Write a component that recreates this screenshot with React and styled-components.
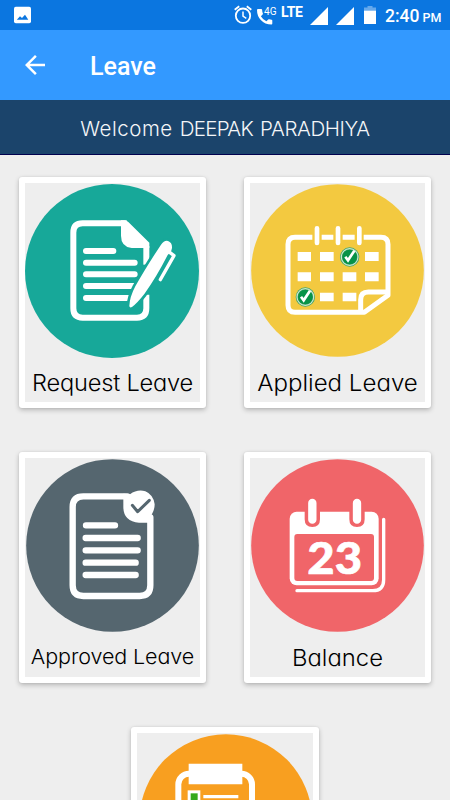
import React from 'react';
import styled, { createGlobalStyle } from 'styled-components';

const GlobalStyle = createGlobalStyle`
  * { box-sizing: border-box; }
  body { margin: 0; background: #eeeeee; }
`;

const Screen = styled.div`
  width: 450px;
  height: 800px;
  overflow: hidden;
  background: #eeeeee;
  font-family: Inter, 'Liberation Sans', sans-serif;
`;

const StatusBar = styled.div`
  display: flex;
  align-items: flex-start;
  justify-content: space-between;
  height: 30px;
  padding: 0 9px 0 14px;
  background: #0b76e0;
  color: #fff;
  font-family: Roboto, sans-serif;
  svg { display: block; flex: none; }
`;

const StatusGroup = styled.div`
  display: flex;
  align-items: flex-start;
  height: 30px;
`;

const StatusIcon = styled.svg`
  width: ${(p) => p.$w}px;
  height: 30px;
  margin-right: ${(p) => p.$gap || 0}px;
`;

const Network = styled.span`
  width: 24px;
  margin-right: 5px;
  font-size: 14px;
  font-weight: 700;
  line-height: 16px;
  padding-top: 4px;
  letter-spacing: -0.3px;
`;

const Clock = styled.span`
  width: 56px;
  font-size: 17.5px;
  font-weight: 500;
  line-height: 22px;
  padding-top: 5px;
  white-space: nowrap;
`;

const Meridiem = styled.span`
  margin-left: 3px;
  font-size: 12.5px;
`;

const Toolbar = styled.header`
  display: flex;
  align-items: center;
  height: 70px;
  padding-left: 20px;
  background: #3399ff;
  color: #fff;
`;

const BackButton = styled.button`
  display: flex;
  width: 30px;
  height: 30px;
  padding: 0;
  border: 0;
  background: none;
  color: #fff;
`;

const Title = styled.h1`
  margin: 3px 0 0 40px;
  font: 500 25px/30px Roboto, sans-serif;
`;

const Banner = styled.div`
  display: flex;
  justify-content: center;
  gap: 7px;
  height: 55px;
  padding-top: 15px;
  border-bottom: 1px solid #00004e;
  background: #1b446b;
  color: #f4f6f8;
  font-size: 20.5px;
  font-weight: 300;
  line-height: 28px;
  font-feature-settings: 'cv11';
  white-space: nowrap;
`;

const BannerWord = styled.span`
  letter-spacing: ${(p) => p.$spacing}px;
`;

const Grid = styled.main`
  display: grid;
  grid-template-columns: 187px 187px;
  column-gap: 38px;
  row-gap: 44px;
  padding: 22px 19px 0;
`;

const Card = styled.section`
  width: ${(p) => (p.$wide ? 188 : 187)}px;
  height: 231px;
  padding: 6px;
  border-radius: 3px;
  background: #fff;
  box-shadow: 0 2px 5px rgba(0, 0, 0, 0.24), 0 0 2px rgba(0, 0, 0, 0.08);
  ${(p) => p.$wide && 'grid-column: 1 / -1; justify-self: center;'}
`;

const CardBody = styled.div`
  height: 219px;
  background: #eeeeee;
`;

const Art = styled.svg`
  display: block;
  width: 175px;
  height: 175px;
  margin: 0 auto;
`;

const Label = styled.div`
  display: flex;
  justify-content: center;
  padding-top: ${(p) => p.$top}px;
  color: #000;
  font-size: ${(p) => p.$size}px;
  font-weight: 300;
  line-height: 30px;
  letter-spacing: ${(p) => p.$spacing}px;
  font-feature-settings: 'cv11';
  white-space: nowrap;
  transform: scaleX(${(p) => p.$stretch});
`;

const PEN = 'M358 408Q359 381 376 349Q408 292 453 224Q463 210 474 213Q487 218 486 234L483 245L473 255Q440 320 403 372Q382 399 366 411Q359 415 358 408Z';

const RequestArt = () => (
  <Art viewBox="45 39 525 525">
    <circle cx="306" cy="303" r="261" fill="#17a899" />
    <g fill="none" stroke="#fff" strokeWidth="18">
      <path d="M350 160H218Q190 160 190 188V415Q190 443 218 443H381Q409 443 409 415V374" />
      <path d="M409 228V284" />
      <g strokeLinecap="round">
        <path d="M228 243H310M228 278H374M228 313H374M228 348H372M228 384H356" />
      </g>
    </g>
    <path d="M333 151H343Q350 151 355 156L418 218V234H365Q333 230 333 197Z" fill="#fff" />
    <path d={PEN} fill="#17a899" stroke="#17a899" strokeWidth="16" />
    <path d={PEN} fill="#fff" />
    <path d="M476 245L492 257L451 329" fill="none" stroke="#fff" strokeWidth="10" strokeLinecap="round" strokeLinejoin="round" />
  </Art>
);

const CheckBadge = ({ x, y }) => (
  <g transform={`translate(${x} ${y})`}>
    <circle r="29" fill="#43a568" />
    <circle r="25" fill="none" stroke="#cbe8d2" strokeWidth="3.5" />
    <circle r="22" fill="#079247" />
    <path d="M-13 -1L-5 10L14 -19" fill="none" stroke="#fff" strokeWidth="8" />
  </g>
);

const AppliedArt = () => (
  <Art viewBox="45 39 525 525">
    <circle cx="307.5" cy="301.5" r="259" fill="#f3c940" />
    <g fill="none" stroke="#fff" strokeWidth="15">
      <path d="M232 202H180Q159 202 159 223V406Q159 427 180 427H388L459 376V223Q459 202 438 202H386" strokeLinejoin="round" />
      <path d="M260 202H295M323 202H359" />
      <path d="M377 427V389Q377 366 400 366H459" />
      <path d="M246 175V219M309 175V219M373 175V219" strokeWidth="14" strokeLinecap="round" />
    </g>
    <g fill="#fff">
      <path d="M188 246h40v27h-40zM255 246h41v27h-41zM390 246h41v27h-41z" />
      <path d="M188 307h40v27h-40zM255 307h41v27h-41zM323 307h41v27h-41zM390 307h41v27h-41z" />
      <path d="M255 368h41v26h-41zM323 368h41v26h-41z" />
    </g>
    <CheckBadge x={344} y={261} />
    <CheckBadge x={211} y={381} />
  </Art>
);

const ApprovedArt = () => (
  <Art viewBox="45 39 525 525">
    <circle cx="307.5" cy="301.5" r="259" fill="#55666f" />
    <g fill="none" stroke="#fff" strokeWidth="19" strokeLinecap="round">
      <path d="M352 154H220Q188 154 188 186V421Q188 453 220 453H389Q421 453 421 421V217" />
      <path d="M228 241H315M227 279H383M227 316H383M227 353H377M227 390H377" />
    </g>
    <path d="M340 146L360 148Q382 132 406 139Q430 149 434 178Q434 194 425 209V233H387Q340 229 340 186Z" fill="#fff" />
    <path d="M367 181L383 200L418 166" fill="none" stroke="#55666f" strokeWidth="9" strokeLinecap="round" strokeLinejoin="round" />
  </Art>
);

const BalanceArt = () => (
  <Art viewBox="45 39 525 525">
    <circle cx="307.5" cy="301.5" r="259" fill="#f06569" />
    <rect x="164" y="200" width="267" height="221" rx="21" fill="#fff" />
    <rect x="178" y="267" width="239" height="141" rx="9" fill="#f06569" />
    <path d="M209 196V223Q209 246 232 246Q255 246 255 223V196ZM343 196V223Q343 246 366 246Q389 246 389 223V196Z" fill="#f06569" />
    <path d="M232 174V224M366 174V224" stroke="#fff" strokeWidth="25" strokeLinecap="round" />
    <path d="M446 223V404Q446 437 413 437H186" fill="none" stroke="#fff" strokeWidth="10" strokeLinecap="round" />
    <text x="217" y="386" fill="#fff" stroke="#fff" strokeWidth="2" fontFamily="Lato, sans-serif" fontWeight="900" fontSize="133" textLength="164" lengthAdjust="spacingAndGlyphs">23</text>
  </Art>
);

const ChecklistArt = () => (
  <Art viewBox="52 53 525 525">
    <circle cx="315.5" cy="316" r="259" fill="#f89f20" />
    <rect x="173" y="175" width="221" height="300" rx="32" fill="none" stroke="#fff" strokeWidth="18" />
    <path d="M204 145H365V207H204Z" fill="#fff" />
    <path d="M201 225h38v38h-38z" fill="#fff" />
    <path d="M210 234h21v21h-21z" fill="#35a81b" />
    <path d="M248 244H353" stroke="#fff" strokeWidth="10" />
  </Art>
);

const cards = [
  { label: 'Request Leave', Picture: RequestArt, top: 10, size: 22.5, spacing: -0.2, stretch: 1.05 },
  { label: 'Applied Leave', Picture: AppliedArt, top: 10, size: 22.5, spacing: 0, stretch: 1.07 },
  { label: 'Approved Leave', Picture: ApprovedArt, top: 9, size: 20.5, spacing: -0.1, stretch: 1.05 },
  { label: 'Balance', Picture: BalanceArt, top: 10, size: 22.5, spacing: 0, stretch: 1.06 },
];

export default function App() {
  return (
    <Screen>
      <GlobalStyle />
      <StatusBar>
        <StatusIcon $w={17} viewBox="0 0 17 30">
          <rect y="6.7" width="17" height="16.5" rx="1.8" fill="#fff" />
          <path d="M2.8 19.8L6 16.3L8 18L11 14.8L14.3 19.8Z" fill="#0b76e0" />
        </StatusIcon>
        <StatusGroup>
          <StatusIcon $w={18} $gap={5} viewBox="0 0 18 30" fill="none" stroke="#fff">
            <circle cx="9" cy="15.7" r="7.2" strokeWidth="1.8" />
            <path d="M9 11.5V16.2L12.3 18.3" strokeWidth="1.5" />
            <path d="M0.7 9.7L5.2 6.2M12.8 6.2L17.3 9.7" strokeWidth="1.8" />
          </StatusIcon>
          <StatusIcon $w={20} $gap={4} viewBox="0 0 20 30" fill="#fff">
            <path d="M1 9H4.3Q5 9 5.1 9.8Q5.2 12 5.9 13.5Q6.1 14.1 5.6 14.6L3.9 16.2Q5.9 19.8 9.4 21.2L11.2 19.5Q11.7 19 12.3 19.3Q13.500 19.7 14.5 19.7Q15.300 19.7 15.300 20.5V23.6Q15.300 24.5 14.5 24.5Q8 24.5 3.8 20Q0 16 0 10Q0 9 1 9Z" />
            <text x="7" y="15.200" fontSize="11.500" textLength="12.500" lengthAdjust="spacingAndGlyphs">4G</text>
          </StatusIcon>
          <Network>LTE</Network>
          <StatusIcon $w={18} $gap={8} viewBox="0 0 18 30"><path d="M18 7V25H0Z" fill="#fff" /></StatusIcon>
          <StatusIcon $w={18} $gap={10} viewBox="0 0 18 30"><path d="M18 7V25H0Z" fill="#fff" /></StatusIcon>
          <StatusIcon $w={12} $gap={9} viewBox="0 0 12 30">
            <path d="M3.5 6H8.5V7.5H12V11H0V7.5H3.5Z" fill="#65a9ec" />
            <path d="M0 10.7H12V24H0Z" fill="#fff" />
          </StatusIcon>
          <Clock>2:40<Meridiem>PM</Meridiem></Clock>
        </StatusGroup>
      </StatusBar>
      <Toolbar>
        <BackButton aria-label="Back">
          <svg width="30" height="30" viewBox="0 0 24 24">
            <path d="M20 11H7.83l5.59-5.59L12 4l-8 8 8 8 1.41-1.41L7.83 13H20v-2z" fill="currentColor" />
          </svg>
        </BackButton>
        <Title>Leave</Title>
      </Toolbar>
      <Banner>
        <BannerWord $spacing={0.5}>Welcome</BannerWord>
        <BannerWord $spacing={-0.7}>DEEPAK</BannerWord>
        <BannerWord $spacing={-0.4}>PARADHIYA</BannerWord>
      </Banner>
      <Grid>
        {cards.map(({ label, Picture, top, size, spacing, stretch }) => (
          <Card key={label}>
            <CardBody>
              <Picture />
              <Label $top={top} $size={size} $spacing={spacing} $stretch={stretch}>{label}</Label>
            </CardBody>
          </Card>
        ))}
        <Card $wide>
          <CardBody>
            <ChecklistArt />
          </CardBody>
        </Card>
      </Grid>
    </Screen>
  );
}
